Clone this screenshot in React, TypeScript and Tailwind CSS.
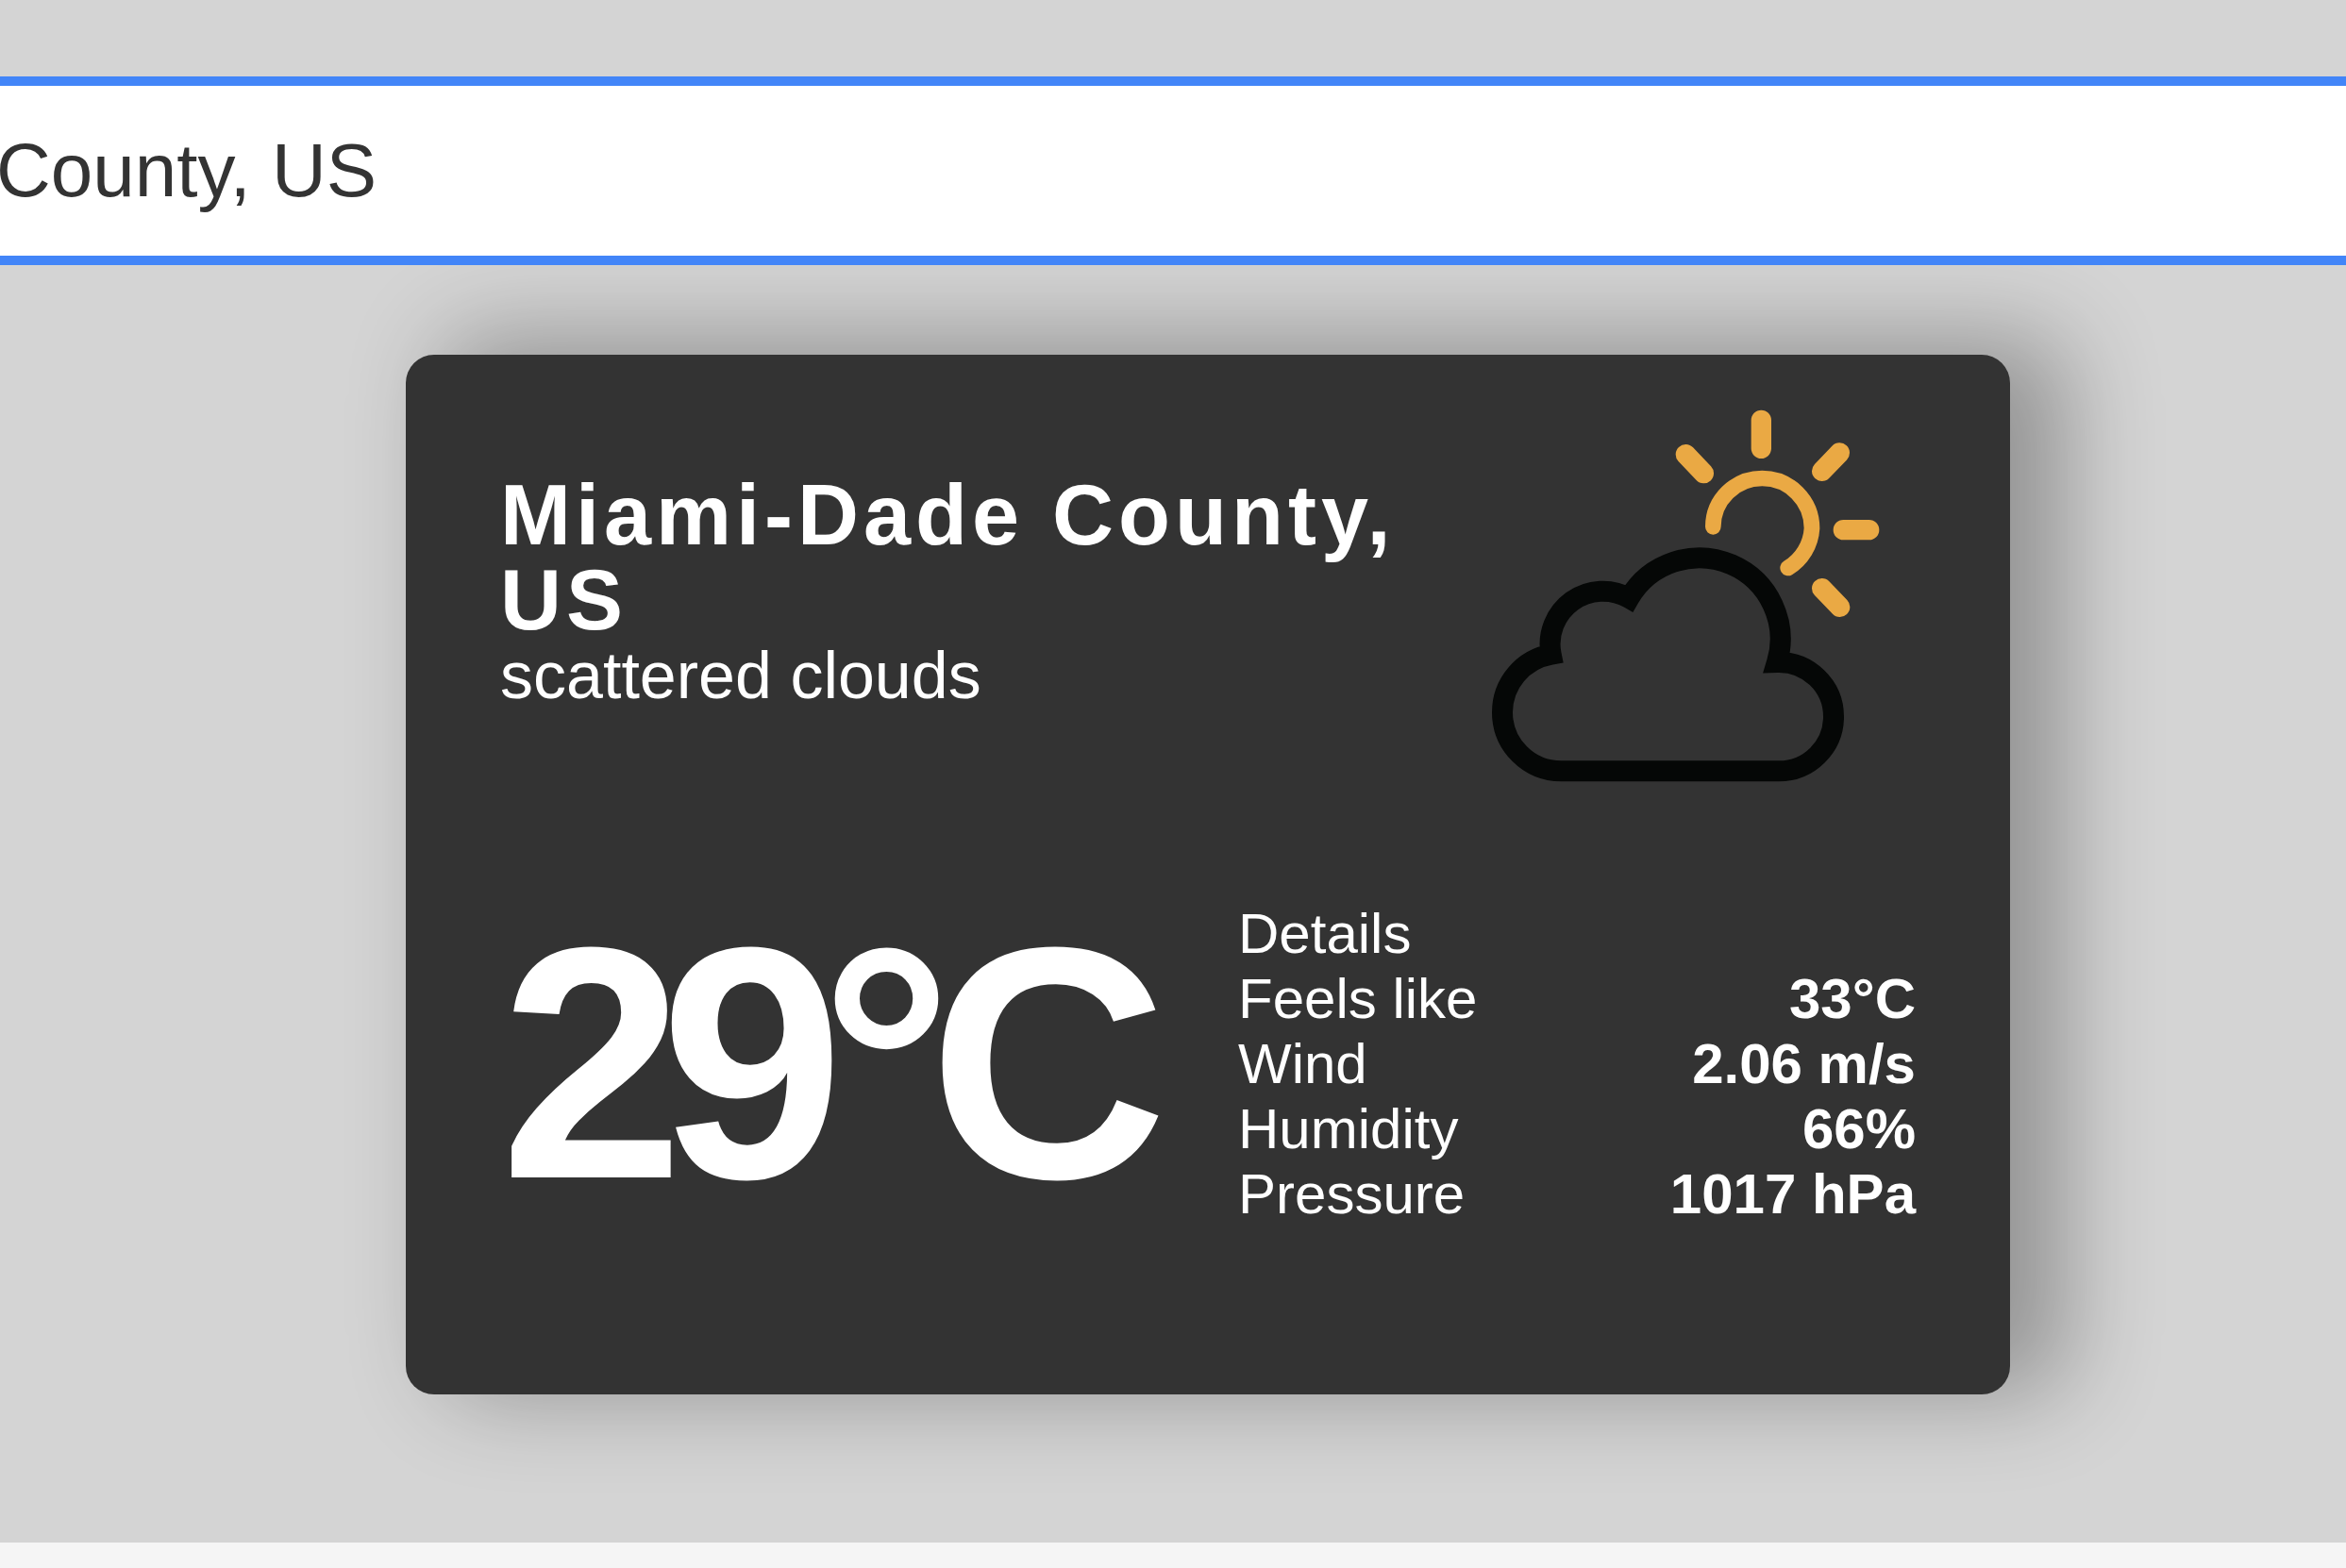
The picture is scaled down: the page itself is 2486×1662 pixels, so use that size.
import { useState } from 'react';

const details = [
  { label: 'Feels like', value: '33°C' },
  { label: 'Wind', value: '2.06 m/s' },
  { label: 'Humidity', value: '66%' },
  { label: 'Pressure', value: '1017 hPa' },
];

function ScatteredCloudsIcon() {
  return (
    <svg
      className="w-[500px] shrink-0"
      viewBox="-90 -72 1500 1500"
      fill="none"
      role="img"
      aria-label="scattered clouds"
    >
      <g stroke="#eaa944" strokeLinecap="round">
        <path d="M766 475A156 154 0 0 1 922 321A158 159 0 0 1 1080 480A158 158 0 0 1 1004 606" strokeWidth="50" />
        <path
          d="M919 136V226M1168 240L1112 298M679 245L736 305M1180 485H1262M1112 671L1169 730"
          strokeWidth="64"
        />
      </g>
      <path
        d="M283 1252A187 187 0 0 1 96 1065A187 187 0 0 1 251 881A168 168 0 0 1 499 702A258 258 0 0 1 969 906A174 173 0 0 1 1149 1079A174 173 0 0 1 975 1252Z"
        stroke="#050706"
        strokeWidth="66"
        strokeMiterlimit="10"
      />
    </svg>
  );
}

function SearchBox() {
  const [query, setQuery] = useState('County, US');
  return (
    <input
      type="text"
      aria-label="Search for city"
      value={query}
      onChange={(event) => setQuery(event.target.value)}
      className="relative z-10 block h-[200px] w-full border-y-10 border-[#4285f8] bg-white -indent-1 text-[80px] text-[#333333] outline-none"
    />
  );
}

function WeatherCard() {
  return (
    <article className="w-full max-w-[1700px] rounded-[30px] bg-[#333333] px-[100px] pb-[100px] text-white shadow-[50px_-10px_100px_10px_rgba(0,0,0,0.3)]">
      <header className="flex items-center justify-between">
        <div>
          <h1 className="text-[90px] leading-none font-bold tracking-[5px]">Miami-Dade County, US</h1>
          <p className="text-[70px] leading-none">scattered clouds</p>
        </div>
        <ScatteredCloudsIcon />
      </header>
      <div className="flex items-center justify-between">
        <p className="my-[50px] text-[350px] leading-[402px] font-bold tracking-[-25px]">29°C</p>
        <section className="grow pl-[100px] text-[60px] leading-[69px]">
          <h2>Details</h2>
          <dl>
            {details.map(({ label, value }) => (
              <div key={label} className="flex justify-between">
                <dt>{label}</dt>
                <dd className="font-bold">{value}</dd>
              </div>
            ))}
          </dl>
        </section>
      </div>
    </article>
  );
}

export default function App() {
  return (
    <div className="min-h-screen overflow-x-hidden bg-[#f5f5f5] font-['Liberation_Sans',Arial,sans-serif]">
      <main className="bg-[#d4d4d4] pt-[81px] pb-[157px]">
        <SearchBox />
        <div className="pt-[95px] pr-[356px] pl-[430px]">
          <WeatherCard />
        </div>
      </main>
    </div>
  );
}
